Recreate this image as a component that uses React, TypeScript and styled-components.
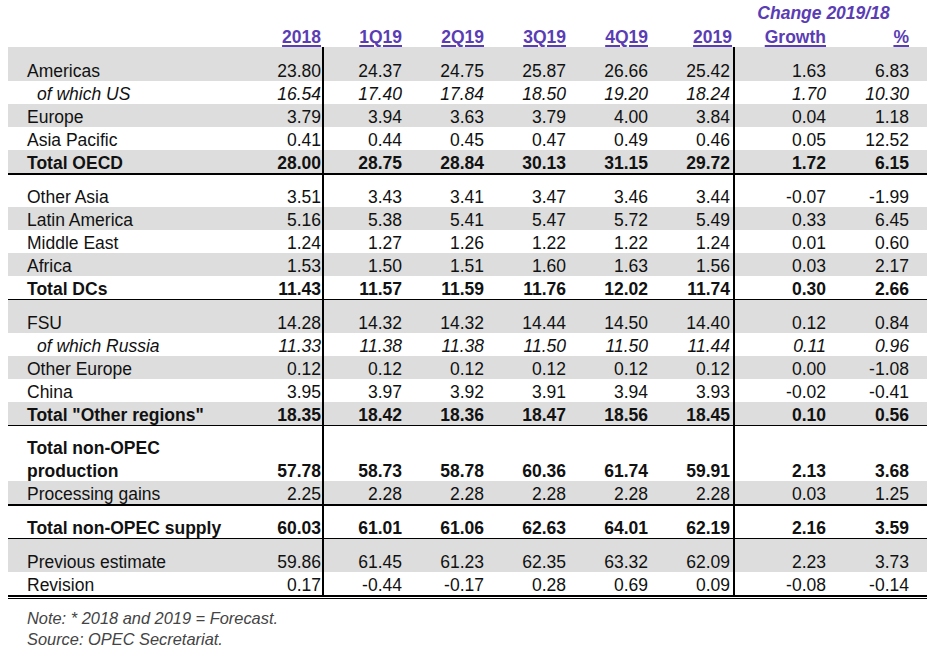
import styled, { createGlobalStyle, css } from "styled-components";

const GlobalStyle = createGlobalStyle`
  html, body {
    margin: 0;
    padding: 0;
    background: #ffffff;
  }
  body {
    font-family: "Liberation Sans", Arial, sans-serif;
    color: #111111;
  }
`;

const COLUMNS = "233px 83px 81px 82px 82px 82px 84px 94px 83px 15px";
const ACCENT = "#5a3db4";
const SHADE = "#dddddd";

type Rule = "thick" | "thin" | "double";

const Page = styled.div`
  width: 919px;
  padding: 0 8px;
  font-size: 17.5px;
`;

const HeadRow = styled.div<{ $height: number; $drop?: number }>`
  display: grid;
  grid-template-columns: ${COLUMNS};
  box-sizing: border-box;
  height: ${(p) => p.$height}px;
  padding-top: ${(p) => p.$drop ?? 0}px;
  line-height: ${(p) => p.$height - (p.$drop ?? 0)}px;
  font-weight: 700;
  color: ${ACCENT};
`;

const GroupTitle = styled.div`
  grid-column: 8 / span 2;
  text-align: center;
  font-style: italic;
`;

const HeadCell = styled.div`
  text-align: right;
  padding-right: 3px;
  span {
    text-decoration: underline;
    text-decoration-thickness: 2px;
    text-underline-offset: 2px;
  }
`;

const Section = styled.div<{ $rule: Rule }>`
  ${(p) =>
    p.$rule === "thick" &&
    css`
      border-bottom: 2px solid #000;
    `}
  ${(p) =>
    p.$rule === "thin" &&
    css`
      border-bottom: 1px solid #000;
    `}
  ${(p) =>
    p.$rule === "double" &&
    css`
      border-bottom: 2px solid #000;
      box-shadow: 0 1px 0 #fff, 0 2px 0 #000;
    `}
`;

const Row = styled.div<{
  $shade?: boolean;
  $bold?: boolean;
  $italic?: boolean;
  $lead: number;
}>`
  display: grid;
  grid-template-columns: ${COLUMNS};
  background: ${(p) => (p.$shade ? SHADE : "transparent")};
  font-weight: ${(p) => (p.$bold ? 700 : 400)};
  font-style: ${(p) => (p.$italic ? "italic" : "normal")};
  line-height: 19px;

  & > * {
    padding-top: ${(p) => p.$lead + 4}px;
  }
`;

const Label = styled.div<{ $indent?: boolean }>`
  padding-left: ${(p) => (p.$indent ? 29 : 19)}px;
  white-space: nowrap;
`;

const LabelLine = styled.div`
  & + & {
    margin-top: 4px;
  }
`;

const Value = styled.div<{ $edge?: boolean }>`
  box-sizing: border-box;
  display: flex;
  align-items: flex-end;
  justify-content: flex-end;
  padding-right: 3px;
  ${(p) =>
    p.$edge &&
    css`
      border-right: 2px solid #000;
    `}
`;

const FirstValue = styled(Value)`
  padding-right: 1px;
`;

const Notes = styled.div`
  padding: 11px 0 0 19px;
  font-size: 16.4px;
  line-height: 21px;
  font-style: italic;
  color: #444444;
`;

type Line = {
  label: string[];
  values: string[];
  shade?: boolean;
  bold?: boolean;
  italic?: boolean;
  indent?: boolean;
};

type Block = { lead: number; rule: Rule; rows: Line[] };

const headers = ["2018", "1Q19", "2Q19", "3Q19", "4Q19", "2019", "Growth", "%"];

const blocks: Block[] = [
  {
    lead: 11,
    rule: "thick",
    rows: [
      { label: ["Americas"], shade: true, values: ["23.80", "24.37", "24.75", "25.87", "26.66", "25.42", "1.63", "6.83"] },
      { label: ["of which US"], italic: true, indent: true, values: ["16.54", "17.40", "17.84", "18.50", "19.20", "18.24", "1.70", "10.30"] },
      { label: ["Europe"], shade: true, values: ["3.79", "3.94", "3.63", "3.79", "4.00", "3.84", "0.04", "1.18"] },
      { label: ["Asia Pacific"], values: ["0.41", "0.44", "0.45", "0.47", "0.49", "0.46", "0.05", "12.52"] },
      { label: ["Total OECD"], shade: true, bold: true, values: ["28.00", "28.75", "28.84", "30.13", "31.15", "29.72", "1.72", "6.15"] },
    ],
  },
  {
    lead: 9,
    rule: "thin",
    rows: [
      { label: ["Other Asia"], values: ["3.51", "3.43", "3.41", "3.47", "3.46", "3.44", "-0.07", "-1.99"] },
      { label: ["Latin America"], shade: true, values: ["5.16", "5.38", "5.41", "5.47", "5.72", "5.49", "0.33", "6.45"] },
      { label: ["Middle East"], values: ["1.24", "1.27", "1.26", "1.22", "1.22", "1.24", "0.01", "0.60"] },
      { label: ["Africa"], shade: true, values: ["1.53", "1.50", "1.51", "1.60", "1.63", "1.56", "0.03", "2.17"] },
      { label: ["Total DCs"], bold: true, values: ["11.43", "11.57", "11.59", "11.76", "12.02", "11.74", "0.30", "2.66"] },
    ],
  },
  {
    lead: 10,
    rule: "thin",
    rows: [
      { label: ["FSU"], shade: true, values: ["14.28", "14.32", "14.32", "14.44", "14.50", "14.40", "0.12", "0.84"] },
      { label: ["of which Russia"], italic: true, indent: true, values: ["11.33", "11.38", "11.38", "11.50", "11.50", "11.44", "0.11", "0.96"] },
      { label: ["Other Europe"], shade: true, values: ["0.12", "0.12", "0.12", "0.12", "0.12", "0.12", "0.00", "-1.08"] },
      { label: ["China"], values: ["3.95", "3.97", "3.92", "3.91", "3.94", "3.93", "-0.02", "-0.41"] },
      { label: ["Total \"Other regions\""], shade: true, bold: true, values: ["18.35", "18.42", "18.36", "18.47", "18.56", "18.45", "0.10", "0.56"] },
    ],
  },
  {
    lead: 9,
    rule: "thick",
    rows: [
      { label: ["Total non-OPEC", "production"], bold: true, values: ["57.78", "58.73", "58.78", "60.36", "61.74", "59.91", "2.13", "3.68"] },
      { label: ["Processing gains"], shade: true, values: ["2.25", "2.28", "2.28", "2.28", "2.28", "2.28", "0.03", "1.25"] },
    ],
  },
  {
    lead: 9,
    rule: "thin",
    rows: [
      { label: ["Total non-OPEC supply"], bold: true, values: ["60.03", "61.01", "61.06", "62.63", "64.01", "62.19", "2.16", "3.59"] },
    ],
  },
  {
    lead: 10,
    rule: "double",
    rows: [
      { label: ["Previous estimate"], shade: true, values: ["59.86", "61.45", "61.23", "62.35", "63.32", "62.09", "2.23", "3.73"] },
      { label: ["Revision"], values: ["0.17", "-0.44", "-0.17", "0.28", "0.69", "0.09", "-0.08", "-0.14"] },
    ],
  },
];

function DataRow({ line, lead }: { line: Line; lead: number }) {
  const [first, ...rest] = line.values;
  return (
    <Row $shade={line.shade} $bold={line.bold} $italic={line.italic} $lead={lead}>
      <Label $indent={line.indent}>
        {line.label.map((part) => (
          <LabelLine key={part}>{part}</LabelLine>
        ))}
      </Label>
      <FirstValue $edge>{first}</FirstValue>
      {rest.map((v, i) => (
        <Value key={i} $edge={i === 4}>
          {v}
        </Value>
      ))}
      <div />
    </Row>
  );
}

export default function App() {
  return (
    <>
      <GlobalStyle />
      <Page>
        <HeadRow $height={26} $drop={1}>
          <GroupTitle>Change 2019/18</GroupTitle>
        </HeadRow>
        <HeadRow $height={21} $drop={2}>
          <div />
          {headers.map((h) => (
            <HeadCell key={h}>
              <span>{h}</span>
            </HeadCell>
          ))}
          <div />
        </HeadRow>
        {blocks.map((block, bi) => (
          <Section key={bi} $rule={block.rule}>
            {block.rows.map((line, ri) => (
              <DataRow key={line.label.join(" ")} line={line} lead={ri === 0 ? block.lead : 0} />
            ))}
          </Section>
        ))}
        <Notes>
          <div>Note: * 2018 and 2019 = Forecast.</div>
          <div>Source: OPEC Secretariat.</div>
        </Notes>
      </Page>
    </>
  );
}
